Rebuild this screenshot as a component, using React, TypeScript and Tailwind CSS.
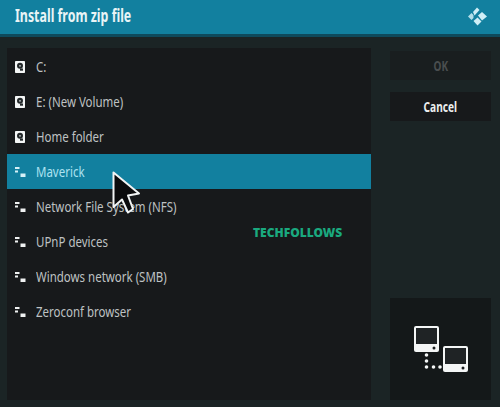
const rows = [
  { label: "C:", icon: "drive" },
  { label: "E: (New Volume)", icon: "drive" },
  { label: "Home folder", icon: "drive" },
  { label: "Maverick", icon: "net", selected: true },
  { label: "Network File System (NFS)", icon: "net" },
  { label: "UPnP devices", icon: "net" },
  { label: "Windows network (SMB)", icon: "net" },
  { label: "Zeroconf browser", icon: "net" },
];

function DriveIcon() {
  return (
    <svg width="10" height="12" viewBox="0 0 10 12" className="shrink-0">
      <rect x="0" y="0" width="10" height="12" rx="0.8" fill="#f4f6f6" />
      <circle cx="5" cy="4.8" r="3" fill="#23282a" />
      <circle cx="5" cy="4.8" r="0.9" fill="#c8cccc" />
      <rect x="5" y="7.5" width="3" height="2.2" fill="#23282a" />
    </svg>
  );
}

function NetIcon({ selected }: { selected?: boolean }) {
  const c = selected ? "#d6f1f8" : "#f0f2f2";
  return (
    <svg width="11" height="10" viewBox="0 0 11 10" className="shrink-0">
      <rect x="0" y="0" width="4.5" height="2" fill={c} />
      <rect x="0" y="3.5" width="3" height="2" fill={c} />
      <rect x="5.5" y="6.5" width="5" height="3.5" fill={c} />
    </svg>
  );
}

function KodiLogo() {
  return (
    <svg width="19" height="19" viewBox="0 0 19 19">
      <g fill="#cfeef6">
        <path d="M0 9.5 L3.5 6 L5.5 8 L5.5 11 L3.5 13 Z" opacity="0.85" />
        <path d="M5 5 L9 0.5 L11.5 3 L6.5 8.5 Z" />
        <path d="M10 8.5 L14 5 L19 9.5 L14 13.5 Z" />
        <path d="M5.5 14 L9.5 10.5 L13.5 14.5 L9.5 18.5 Z" />
      </g>
    </svg>
  );
}

function Computer({ transform }: { transform?: string }) {
  return (
    <g transform={transform}>
      <rect x="1" y="1" width="23" height="18" rx="1" fill="#1f2325" stroke="#f4f6f6" strokeWidth="2" />
      <path d="M0 18 H25 V24 a2 2 0 0 1 -2 2 H2 a2 2 0 0 1 -2 -2 Z" fill="#f4f6f6" />
      <circle cx="20" cy="22" r="1.5" fill="#1a1d1f" />
    </g>
  );
}

function Computers() {
  return (
    <svg width="54" height="46" viewBox="0 0 54 46" fill="none">
      <Computer />
      <Computer transform="translate(29 20)" />
      <g fill="#f4f6f6">
        <circle cx="12.5" cy="29" r="1.8" />
        <circle cx="12.5" cy="35" r="1.8" />
        <circle cx="12.5" cy="41" r="1.8" />
        <circle cx="19.5" cy="41" r="1.8" />
        <circle cx="26" cy="41" r="1.8" />
      </g>
    </svg>
  );
}

function Cursor() {
  return (
    <svg width="30" height="46" viewBox="0 0 30 46">
      <path
        d="M1.5 1.5 L1.5 36 L10 28.5 L16 41.5 L21 38 L16 24.5 L27 22.5 Z"
        fill="#0b0b0c"
        stroke="#f2f4f4"
        strokeWidth="2"
        strokeLinejoin="round"
      />
    </svg>
  );
}

export default function App() {
  return (
    <div className="relative flex h-[407px] w-[500px] flex-col overflow-hidden bg-[#1b2425] font-['Noto_Sans',sans-serif]">
      <header className="flex h-[37px] shrink-0 items-start justify-between border-b-[3px] border-[#0e4a5c] bg-[#12809f]">
        <h1 className="ml-[15px] mt-[4px] origin-left scale-x-[0.73] whitespace-nowrap text-[17px] leading-[24px] font-bold text-[#e9f4f6]">
          Install from zip file
        </h1>
        <div className="mr-[13px] mt-[7px]">
          <KodiLogo />
        </div>
      </header>
      <main className="flex flex-1 pb-[7px] pl-[7px] pr-[9px] pt-[11px]">
        <section className="w-[364px] bg-[#17191b] pt-px">
          <ul className="flex flex-col">
            {rows.map((r) => (
              <li
                key={r.label}
                className={
                  r.selected
                    ? "flex h-[35px] items-center bg-[#12809f] pl-[8px] text-[15px] text-[#aee3f1]"
                    : "flex h-[35px] items-center pl-[8px] text-[15px] text-[#bfc2c3]"
                }
              >
                <span className="flex w-[21px] shrink-0 items-center">
                  {r.icon === "drive" ? <DriveIcon /> : <NetIcon selected={r.selected} />}
                </span>
                <span className="origin-left scale-x-[0.766] whitespace-nowrap">{r.label}</span>
              </li>
            ))}
          </ul>
        </section>
        <aside className="ml-[19px] flex w-[101px] flex-col pt-[3px]">
          <div className="flex h-[29px] items-center justify-center bg-[#191e1f] pt-[1px] text-[13.5px] font-bold text-[#4a4e4f]">
            <span className="scale-x-[0.74]">OK</span>
          </div>
          <div className="mt-[12px] flex h-[29px] items-center justify-center bg-[#17191b] pt-[1px] text-[13.5px] font-bold text-[#eceeee]">
            <span className="scale-x-[0.75]">Cancel</span>
          </div>
          <div className="mt-auto flex h-[102px] items-center justify-center bg-[#141819]">
            <Computers />
          </div>
        </aside>
      </main>
      <div className="absolute left-[112px] top-[171px]">
        <Cursor />
      </div>
      <div className="absolute left-[253px] top-[226px] text-[12px] leading-[14px] font-black text-[#1aa97f]">
        TECHFOLLOWS
      </div>
    </div>
  );
}
